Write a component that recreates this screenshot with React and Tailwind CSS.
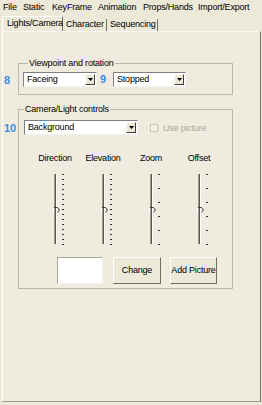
import React from 'react';

const FONT = "font-['Liberation_Sans',Arial,sans-serif]";

function Combo({ value, width }) {
  return (
    <div className={`flex h-[15px] items-center bg-white border-t border-l border-t-[#808080] border-l-[#808080] border-b border-r border-b-[#f4f3ee] border-r-[#f4f3ee] ${width}`}>
      <span className="flex-1 pl-[3px] text-[9px] leading-[13px] text-black">{value}</span>
      <span className="mr-[1px] flex h-[11px] w-[10px] items-center justify-center bg-[#ece9d8] border-t border-l border-t-white border-l-white border-b border-r border-b-[#404040] border-r-[#404040]">
        <svg width="5" height="3" viewBox="0 0 5 3">
          <path d="M0 0h5L2.5 3z" fill="#000" />
        </svg>
      </span>
    </div>
  );
}

function Slider({ label, ticks, step }) {
  const ys = Array.from({ length: ticks }, (_, i) => 4 + i * step);
  return (
    <div className="flex flex-col items-center">
      <span className="text-[9px] leading-[10px] text-black">{label}</span>
      <svg className="mt-[7px]" width="48" height="78" viewBox="0 0 48 78">
        <rect x="23" y="4" width="1" height="70" fill="#9d9a8b" />
        <rect x="24" y="4" width="1" height="70" fill="#5a584f" />
        <rect x="25" y="4" width="1" height="70" fill="#ffffff" />
        <path d="M22.5 37.5h4l2 2.5-2 2.5" fill="none" stroke="#404040" strokeWidth="1" />
        <path d="M22.5 37.5v5" stroke="#ffffff" />
        {ys.map((y) => (
          <rect key={y} x="31" y={y} width="2" height="1" fill="#303030" />
        ))}
      </svg>
    </div>
  );
}

export default function App() {
  const raised = 'bg-[#ece9d8] border-t border-l border-t-white border-l-white border-b border-r border-b-[#716f64] border-r-[#716f64]';
  return (
    <div className={`w-[262px] h-[405px] overflow-hidden bg-[#ece9d8] text-black tracking-[-0.2px] ${FONT}`}>
      {/* menu bar */}
      <div className="flex h-[14px] items-center whitespace-nowrap pl-[3px] text-[9px] leading-[14px]">
        <span className="w-[20px]">File</span>
        <span className="w-[29px]">Static</span>
        <span className="w-[46px]">KeyFrame</span>
        <span className="w-[45px]">Animation</span>
        <span className="w-[55px]">Props/Hands</span>
        <span>Import/Export</span>
      </div>

      {/* tabs */}
      <div className="flex h-[17px] items-end whitespace-nowrap pl-[2px] text-[9px]">
        <div className="flex h-[15px] w-[61px] items-center pl-[4px] border-t border-l border-t-white border-l-white border-r border-r-[#716f64]">
          Lights/Camera
        </div>
        <div className="flex h-[12px] w-[44px] items-center pl-[3px] border-r border-r-[#716f64]">
          Character
        </div>
        <div className="flex h-[12px] w-[51px] items-center pl-[3px] border-r border-r-[#716f64]">
          Sequencing
        </div>
      </div>

      {/* tab panel */}
      <div className="ml-[2px] h-[371px] w-[259px] bg-[#efebdf] border-l border-l-white border-r border-r-[#716f64] border-b border-b-[#a09d8c] border-t border-t-[#f8f7f2]">
        <fieldset className="relative ml-[15px] mt-[26px] w-[215px] border border-[#bdb9a8] pb-[7px] pl-[4px] pt-[4px]">
          <legend className="ml-[5px] px-[1px] text-[9px] leading-[10px]">Viewpoint and rotation</legend>
          <span className="absolute left-[-15px] top-[6px] text-[11px] font-bold leading-[13px] text-[#3a8de3]">8</span>
          <div className="flex items-center">
            <Combo value="Faceing" width="w-[74px]" />
            <span className="ml-[3px] w-[8px] text-[11px] font-bold leading-[13px] text-[#3a8de3]">9</span>
            <span className="ml-[5px]">
              <Combo value="Stopped" width="w-[73px]" />
            </span>
          </div>
        </fieldset>

        <fieldset className="relative ml-[15px] mt-[9px] w-[215px] border border-[#bdb9a8] pb-[4px] pt-[6px]">
          <legend className="ml-[5px] px-[1px] text-[9px] leading-[10px]">Camera/Light controls</legend>
          <span className="absolute left-[-15px] top-[8px] text-[11px] font-bold leading-[13px] text-[#3a8de3]">10</span>
          <div className="flex items-center pl-[5px]">
            <Combo value="Background" width="w-[114px]" />
            <span className="ml-[12px] h-[8px] w-[8px] border border-[#c7c5b2] bg-[#f2f1ea]" />
            <span className="ml-[5px] text-[9px] leading-[12px] text-[#aca899]">Use picture</span>
          </div>

          <div className="ml-[12px] mt-[18px] grid w-[192px] grid-cols-4">
            <Slider label="Direction" ticks={15} step={5} />
            <Slider label="Elevation" ticks={15} step={5} />
            <Slider label="Zoom" ticks={6} step={14} />
            <Slider label="Offset" ticks={6} step={14} />
          </div>

          <div className="ml-[38px] mt-[9px] flex items-center whitespace-nowrap text-[9px]">
            <div className="h-[27px] w-[46px] bg-white border-t border-l border-t-[#aca899] border-l-[#aca899] border-b border-r border-b-[#f4f3ee] border-r-[#f4f3ee]" />
            <button className={`ml-[10px] h-[27px] w-[48px] p-0 ${raised}`}>Change</button>
            <button className={`ml-[9px] h-[27px] w-[47px] p-0 ${raised}`}>Add Picture</button>
          </div>
        </fieldset>
      </div>
    </div>
  );
}
